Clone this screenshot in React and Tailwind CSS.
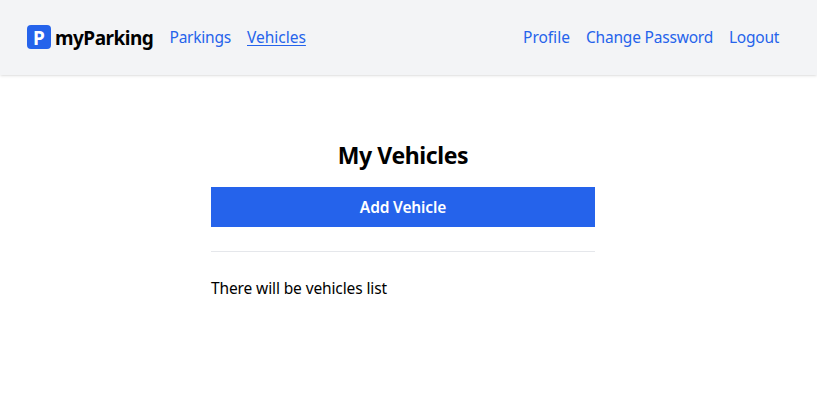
export default function App() {
  return (
    <div className="min-h-screen bg-white font-['Noto_Sans',sans-serif] text-[15.5px] leading-6 text-black">
      <header className="flex h-[75px] items-center justify-between bg-[#f3f4f6] pb-px pl-[27px] pr-[38px] whitespace-nowrap shadow">
        <div className="flex items-center">
          <a className="mr-4 flex items-center gap-1 text-[19px] leading-6 font-bold">
            <span className="flex h-6 w-6 items-center justify-center rounded bg-[#2563eb] pt-0.5 text-white">P</span>
            <span className="w-[98.5px] pt-px tracking-[-0.5px]">myParking</span>
          </a>
          <a className="mr-4 w-[61.5px] tracking-[-0.23px] text-[#2563eb]">Parkings</a>
          <a className="w-[59px] text-[#2563eb] underline underline-offset-2">Vehicles</a>
        </div>
        <nav className="flex items-center gap-4">
          <a className="w-[47px] text-[#2563eb]">Profile</a>
          <a className="w-[127px] tracking-[-0.2px] text-[#2563eb]">Change Password</a>
          <a className="w-[50px] tracking-[-0.25px] text-[#2563eb]">Logout</a>
        </nav>
      </header>
      <main className="ml-[211px] flex w-96 flex-col pt-16">
        <h1 className="mb-4 text-center text-[23px] leading-8 font-bold tracking-[-0.4px]">My Vehicles</h1>
        <button className="h-10 bg-[#2563eb] font-semibold tracking-[-0.15px] text-white">Add Vehicle</button>
        <div className="my-6 h-px bg-gray-200" />
        <div className="tracking-[-0.12px]">There will be vehicles list</div>
      </main>
    </div>
  );
}
